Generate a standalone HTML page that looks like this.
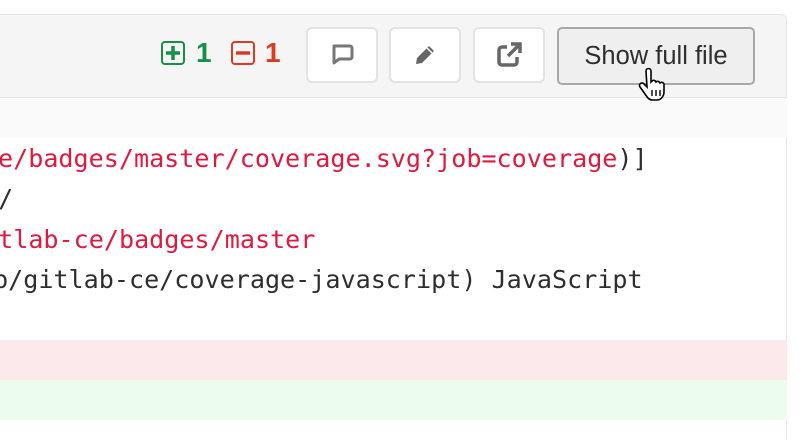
<!DOCTYPE html>
<html style="height:440px;overflow:hidden"><head><meta charset="utf-8"><style>
body{margin:0;width:806px;height:440px;overflow:hidden;background:#fff;position:relative;font-family:"Liberation Sans",sans-serif}
.card{position:absolute;left:-10px;top:14px;width:797px;height:426px;border:1px solid #e5e5e5;border-bottom:none;border-radius:6px 6px 0 0;background:#fff;box-sizing:border-box}
.hdr{position:absolute;left:0;top:0;right:0;height:82px;background:#f5f5f5;border-bottom:2px solid #e5e5e5;border-radius:6px 6px 0 0}
.band{position:absolute;left:-10px;width:797px}
.btn{position:absolute;top:27px;height:56px;width:72px;border:2px solid #e3e3e3;border-radius:6px;background:#fff;box-sizing:border-box;display:flex;align-items:center;justify-content:center}
.code{position:absolute;left:-2px;font-family:"DejaVu Sans Mono",monospace;font-size:25.1px;white-space:pre;color:#2e2e2e;line-height:40px}
.r{color:#e0193f}
</style></head><body>
<div class="card"><div class="hdr"></div></div>
<div class="band" style="top:98px;height:40px;background:#fafafa"></div>
<div class="band" style="top:340px;height:40px;background:#fbe9eb"></div>
<div class="band" style="top:380px;height:40px;background:#ecfdf0"></div>
<div class="code" style="top:139px"><span class="r">e/badges/master/coverage.svg?job=coverage</span>)]</div>
<div class="code" style="top:179px;left:-17px">y/</div>
<div class="code" style="top:220px;left:-17px"><span class="r">itlab-ce/badges/master</span></div>
<div class="code" style="top:260px;left:-7px">b/gitlab-ce/coverage-javascript) JavaScript</div>

<svg style="position:absolute;left:161px;top:41px" width="24" height="24"><rect x="1" y="1" width="22" height="22" rx="3" fill="none" stroke="#168f48" stroke-width="2"/><path d="M12 5v14M5 12h14" stroke="#168f48" stroke-width="3.5"/></svg>
<div style="position:absolute;left:196px;top:37px;font-size:28px;font-weight:bold;color:#168f48">1</div>
<svg style="position:absolute;left:231px;top:41px" width="24" height="24"><rect x="1" y="1" width="22" height="22" rx="3" fill="none" stroke="#db3b21" stroke-width="2"/><path d="M5 12h14" stroke="#db3b21" stroke-width="3.5"/></svg>
<div style="position:absolute;left:265px;top:37px;font-size:28px;font-weight:bold;color:#db3b21">1</div>

<div class="btn" style="left:306px"><svg width="26" height="26" viewBox="0 0 26 26"><path d="M5 4h16a2 2 0 0 1 2 2v9a2 2 0 0 1-2 2H10l-5 4V6a2 2 0 0 1 2-2z" fill="none" stroke="#777" stroke-width="3" stroke-linejoin="round"/></svg></div>
<div class="btn" style="left:389px"><svg width="26" height="26" viewBox="0 0 26 26"><path d="M4 22l1-6L17 4l5 5L10 21z" fill="#666"/><path d="M15 6l5 5" stroke="#fff" stroke-width="1.5"/></svg></div>
<div class="btn" style="left:473px"><svg width="28" height="28" viewBox="0 0 28 28"><path d="M12 6H7a3 3 0 0 0-3 3v12a3 3 0 0 0 3 3h12a3 3 0 0 0 3-3v-5" fill="none" stroke="#666" stroke-width="3.5"/><path d="M13 15L23 5M16 3h9v9" fill="none" stroke="#666" stroke-width="3.5"/></svg></div>
<div style="position:absolute;left:557px;top:27px;width:198px;height:58px;border:2px solid #a8a8a8;border-radius:5px;background:#efefef;box-sizing:border-box;font-size:25.5px;color:#2e2e2e;display:flex;align-items:center;justify-content:center">Show full file</div>
<svg style="position:absolute;left:638px;top:68px" width="34" height="36" viewBox="0 0 34 36"><path d="M8 3a2.5 2.5 0 0 1 5 0v11l1-1a2.5 2.5 0 0 1 4 1 2.5 2.5 0 0 1 4 1 2.5 2.5 0 0 1 4 1v8c0 4-3 8-7 8h-5c-3 0-5-3-7-6l-5-7a2.5 2.5 0 0 1 4-3l3 3z" fill="#fff" stroke="#000" stroke-width="1.6"/><path d="M14 22v6M18 22v6M22 22v6" stroke="#000" stroke-width="1.4"/></svg>
</body></html>
